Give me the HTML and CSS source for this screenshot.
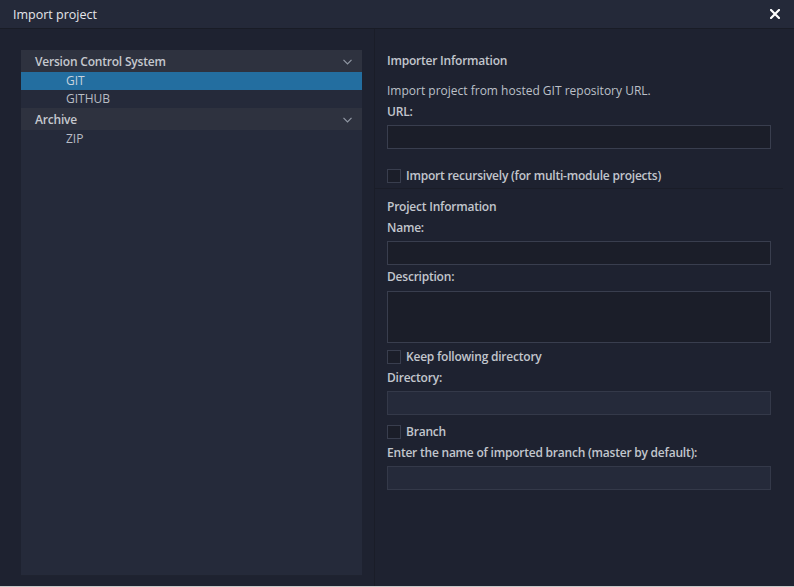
FILE: index.html
```html
<!DOCTYPE html>
<html>
<head>
<meta charset="utf-8">
<link rel="stylesheet" href="styles.css">
</head>
<body>
<div class="dialog">
  <div class="titlebar">
    <span class="title">Import project</span>
    <svg class="close" width="10" height="10" viewBox="0 0 10 10"><path d="M1 1L9 9M9 1L1 9" stroke="#ffffff" stroke-width="2.2" stroke-linecap="square"/></svg>
  </div>
  <div class="content">
    <div class="left">
      <div class="tree">
        <div class="group">
          <span>Version Control System</span>
          <svg class="chev" width="9" height="6" viewBox="0 0 9 6"><path d="M0.5 0.8L4.5 4.8L8.5 0.8" fill="none" stroke="#9097a3" stroke-width="1.2"/></svg>
        </div>
        <div class="item selected">GIT</div>
        <div class="item">GITHUB</div>
        <div class="group">
          <span>Archive</span>
          <svg class="chev" width="9" height="6" viewBox="0 0 9 6"><path d="M0.5 0.8L4.5 4.8L8.5 0.8" fill="none" stroke="#9097a3" stroke-width="1.2"/></svg>
        </div>
        <div class="item">ZIP</div>
      </div>
    </div>
    <div class="right">
      <div class="section-title first">Importer Information</div>
      <div class="desc">Import project from hosted GIT repository URL.</div>
      <div class="label">URL:</div>
      <div class="field"></div>
      <div class="check-row recursive"><span class="box"></span><span>Import recursively (for multi-module projects)</span></div>
      <div class="sep"></div>
      <div class="section-title second">Project Information</div>
      <div class="label">Name:</div>
      <div class="field"></div>
      <div class="label gap2">Description:</div>
      <div class="field area"></div>
      <div class="check-row keep"><span class="box"></span><span>Keep following directory</span></div>
      <div class="label">Directory:</div>
      <div class="field disabled"></div>
      <div class="check-row branch"><span class="box"></span><span>Branch</span></div>
      <div class="label">Enter the name of imported branch (master by default):</div>
      <div class="field disabled"></div>
    </div>
  </div>
</div>
</body>
</html>
```
FILE: styles.css
```css
html, body {
  margin: 0;
  padding: 0;
}
body {
  background: #1e2230;
  font-family: "Open Sans", "Noto Sans", sans-serif;
  font-size: 12px;
  color: #c3c7ce;
  width: 794px;
  height: 587px;
  overflow: hidden;
}
.dialog {
  height: 586px;
  display: flex;
  flex-direction: column;
  border-bottom: 1px solid #c8c8c8;
}
.titlebar {
  height: 28px;
  flex: none;
  background: #242939;
  border-bottom: 1px solid #191c26;
  display: flex;
  align-items: center;
  justify-content: space-between;
  padding: 0 14px 0 13px;
}
.title {
  font-size: 12.5px;
  color: #e4e6ea;
}
.close {
  display: block;
}
.content {
  flex: 1;
  display: flex;
  min-height: 0;
}
.left {
  width: 341px;
  padding: 21px 12px 10px 21px;
  border-right: 1px solid #1a1d28;
  background: #1e2230;
  display: flex;
}
.tree {
  flex: 1;
  background: #252a3a;
  border-bottom: 1px solid #1f2330;
}
.group {
  height: 22px;
  background: #2e323f;
  display: flex;
  align-items: center;
  justify-content: space-between;
  padding: 0 10px 0 14px;
  font-weight: 600;
  letter-spacing: -0.2px;
  color: #c5c8ce;
}
.chev {
  display: block;
  margin-top: 1px;
}
.item {
  height: 18px;
  line-height: 18px;
  padding-left: 45px;
  color: #b9bdc5;
}
.item.selected {
  background: #236ea0;
  color: #c9d3de;
}
.right {
  flex: 1;
  padding: 23px 0 0 12px;
  display: flex;
  flex-direction: column;
  align-items: flex-start;
}
.section-title {
  font-weight: 600;
  letter-spacing: -0.22px;
  line-height: 18px;
  color: #c2c6cd;
}
.desc {
  margin-top: 12px;
  line-height: 18px;
  color: #bcc0c8;
}
.label {
  margin-top: 3px;
  line-height: 18px;
  font-weight: 600;
  letter-spacing: -0.22px;
  color: #c2c6cd;
}
.label.gap2 {
  margin-top: 3px;
}
.field {
  margin-top: 4px;
  width: 382px;
  height: 22px;
  background: #1b1e29;
  border: 1px solid #393e4e;
  flex: none;
}
.field.area {
  margin-top: 5px;
  height: 50px;
}
.field.disabled {
  background: #252a3a;
  border-color: #343949;
}
.check-row {
  display: flex;
  align-items: center;
  gap: 5px;
  line-height: 18px;
  font-weight: 600;
  letter-spacing: -0.22px;
  color: #c2c6cd;
}
.check-row.recursive {
  margin-top: 18px;
}
.check-row.keep {
  margin-top: 5px;
}
.check-row.branch {
  margin-top: 8px;
}
.box {
  width: 12px;
  height: 12px;
  border: 1px solid #393e4e;
  background: #1b1e29;
  flex: none;
}
.sep {
  align-self: stretch;
  margin: 3px 11px 0 -12px;
  height: 1px;
  background: #1a1d28;
}
.section-title.second {
  margin-top: 9px;
}
```
